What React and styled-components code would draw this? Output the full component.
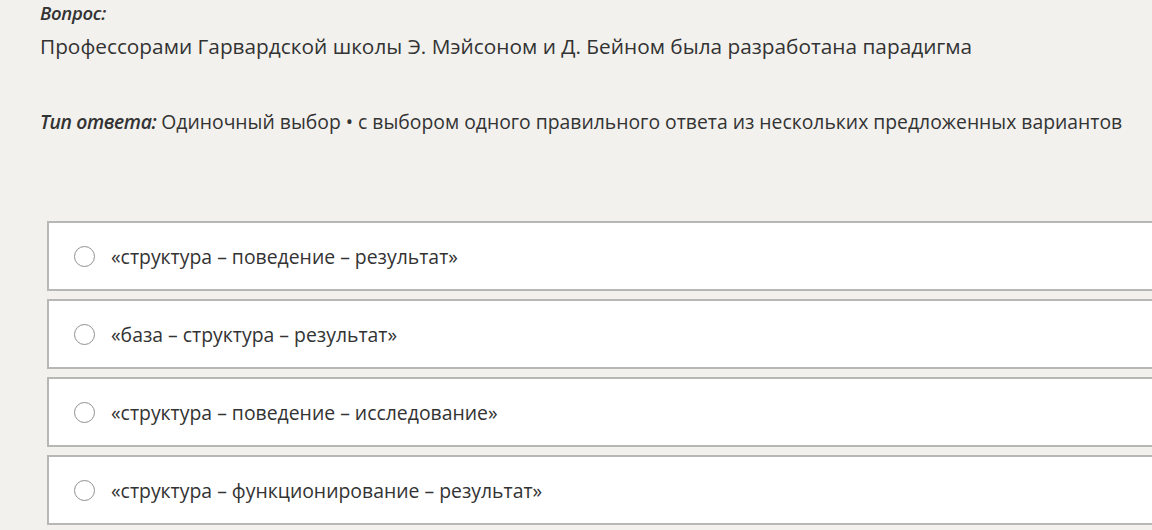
import React from 'react'
import styled, { createGlobalStyle } from 'styled-components';

const GlobalStyle = createGlobalStyle`
  html, body {
    margin: 0;
    padding: 0;
    background: #f2f1ee;
    overflow: hidden;
  }
  body {
    font-family: "Open Sans", "Noto Sans", sans-serif;
    color: #333;
  }
`

const options = [
  "«структура – поведение – результат»",
  "«база – структура – результат»",
  "«структура – поведение – исследование»",
  "«структура – функционирование – результат»",
]

const App = () => {
  return (
    <Wrapper>
      <GlobalStyle />
      <Label>Вопрос:</Label>
      <Question>Профессорами Гарвардской школы Э. Мэйсоном и Д. Бейном была разработана парадигма</Question>
      <AnswerType>
        <em>Тип ответа:</em> Одиночный выбор • с выбором одного правильного ответа из нескольких предложенных вариантов
      </AnswerType>
      <Options>
        {options.map((curElem, index) => {
          return (
            <Option key={index}>
              <Radio />
              <span>{curElem}</span>
            </Option>
          )
        })}
      </Options>
    </Wrapper>
  )
}

const Wrapper = styled.div`
  width: 1152px;
  height: 530px;
  overflow: hidden;
  padding: 1px 0 0 40px;
  box-sizing: border-box;
`

const Label = styled.div`
  font-size: 18.5px;
  font-style: italic;
  font-weight: 600;
  line-height: 24px;
  letter-spacing: -0.3px;
`

const Question = styled.div`
  font-size: 20.8px;
  line-height: 26px;
  margin-top: 8px;
`

const AnswerType = styled.div`
  font-size: 19.35px;
  line-height: 24px;
  margin-top: 51px;
  em {
    font-weight: 600;
    letter-spacing: -0.4px;
  }
`

const Options = styled.div`
  display: flex;
  flex-direction: column;
  gap: 8px;
  margin-top: 87px;
  margin-left: 7px;
  width: 1200px;
`

const Option = styled.div`
  display: flex;
  align-items: center;
  gap: 16px;
  height: 66px;
  padding-left: 25px;
  background: #fff;
  border: 2px solid #b7b7b5;
  border-right: none;
  font-size: 19.4px;
`

const Radio = styled.div`
  width: 19px;
  height: 19px;
  border-radius: 50%;
  border: 1.5px solid #909090;
  background: #fff;
  flex-shrink: 0;
`

export default App
